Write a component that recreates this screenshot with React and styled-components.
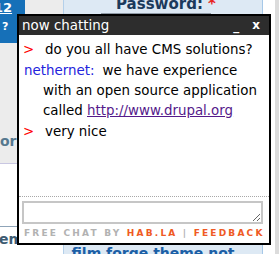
import React from 'react'
import styled, { createGlobalStyle } from 'styled-components'

const GlobalStyle = createGlobalStyle`
  html, body {
    margin: 0;
    padding: 0;
  }
  body {
    width: 279px;
    height: 254px;
    overflow: hidden;
    background: #fff;
    font-family: "DejaVu Sans", Verdana, sans-serif;
  }
`

const messages = [
  { from: 'me', text: 'do you all have CMS solutions?' },
  {
    from: 'nethernet',
    text: 'we have experience with an open source application called ',
    link: 'http://www.drupal.org',
  },
  { from: 'me', text: 'very nice' },
]

const App = () => {
  return (
    <>
      <GlobalStyle />
      <Page>
        <Side>
          <SideTop>
            <BlueTab>
              <TabNumber>12</TabNumber>
              <TabHelp>?</TabHelp>
            </BlueTab>
            <SideLabel>or</SideLabel>
          </SideTop>
          <SideMiddle />
          <SideLabel $bottom>eme</SideLabel>
        </Side>

        <Main>
          <LoginPanel>
            <PanelLabel>
              Password: <Required>*</Required>
            </PanelLabel>
            <PanelInput />
          </LoginPanel>
          <ThemePanel>film forge theme not</ThemePanel>
        </Main>

        <Gutter>
          <Scroll />
        </Gutter>

        <ChatWindow>
          <ChatHeader>
            <ChatTitle>now chatting</ChatTitle>
            <HeaderControls>
              <Minimize>_</Minimize>
              <Close>x</Close>
            </HeaderControls>
          </ChatHeader>

          <MessageList>
            {messages.map((m, i) => (
              <Message key={i}>
                {m.from === 'me' ? (
                  <Arrow>&gt;</Arrow>
                ) : (
                  <Sender>{m.from}:</Sender>
                )}
                {m.text}
                {m.link && <ChatLink href={m.link}>{m.link}</ChatLink>}
              </Message>
            ))}
          </MessageList>

          <InputArea>
            <ChatInput />
          </InputArea>

          <Footer>
            FREE CHAT BY <Brand>HAB.LA</Brand> | <Brand>FEEDBACK</Brand>
          </Footer>
        </ChatWindow>
      </Page>
    </>
  )
}

export default App

const Page = styled.div`
  position: relative;
  width: 279px;
  height: 254px;
  display: flex;
  overflow: hidden;
`

const Side = styled.div`
  width: 63px;
  display: flex;
  flex-direction: column;
`

const SideTop = styled.div`
  height: 163px;
  background: #ececec;
  border-bottom: 1px solid #c9c7e2;
  display: flex;
  flex-direction: column;
`

const BlueTab = styled.div`
  width: 25px;
  height: 43px;
  background: #1670b8;
  color: #fff;
  font-family: Verdana, "DejaVu Sans", sans-serif;
  font-weight: bold;
  overflow: hidden;
`

const TabNumber = styled.div`
  font-size: 13px;
  line-height: 15px;
  margin: 0 0 0 -6px;
  text-decoration: underline;
`

const TabHelp = styled.div`
  font-size: 11px;
  line-height: 12px;
  margin: 6px 0 0 2px;
`

const SideLabel = styled.div`
  margin-top: ${p => (p.$bottom ? '4px' : 'auto')};
  margin-bottom: ${p => (p.$bottom ? '0' : '14px')};
  margin-left: ${p => (p.$bottom ? '-1px' : '0')};
  font-size: 14px;
  line-height: 16px;
  font-weight: bold;
  color: ${p => (p.$bottom ? '#3d5b72' : '#56788f')};
  white-space: nowrap;
`

const SideMiddle = styled.div`
  height: 62px;
  border-bottom: 1px solid #8fa4b8;
`

const Main = styled.div`
  width: 200px;
  display: flex;
  flex-direction: column;
`

const LoginPanel = styled.div`
  flex: 1;
  background: #dde9f4;
  border-left: 1px solid #b4d0ea;
  border-right: 1px solid #a6c8e8;
  display: flex;
  flex-direction: column;
  align-items: center;
`

const PanelLabel = styled.div`
  margin-top: -5px;
  margin-left: 6px;
  font-size: 15px;
  line-height: 18px;
  font-weight: bold;
  color: #1b3a5c;
`

const Required = styled.span`
  color: #e8231e;
`

const PanelInput = styled.div`
  width: 110px;
  height: 30px;
  margin-left: -14px;
  border-top: 1px solid #8f9aa6;
  background: #eef3f8;
`

const ThemePanel = styled.div`
  height: 9px;
  border-top: 1px solid #b4d0ea;
  border-left: 1px solid #b4d0ea;
  border-right: 1px solid #a6c8e8;
  background: #dde9f4;
  font-size: 14px;
  line-height: 17px;
  font-weight: bold;
  color: #1b5fa6;
  text-align: center;
  overflow: hidden;
  text-indent: -20px;
`

const Gutter = styled.div`
  flex: 1;
  display: flex;
  justify-content: flex-end;
`

const Scroll = styled.div`
  width: 4px;
  background: #dcdcdc;
`

const ChatWindow = styled.div`
  position: absolute;
  left: 17px;
  top: 14px;
  width: 254px;
  height: 231px;
  box-sizing: border-box;
  border: 2px solid #000;
  background: #fff;
  display: flex;
  flex-direction: column;
  font-family: "DejaVu Sans", Verdana, sans-serif;
`

const ChatHeader = styled.div`
  height: 19px;
  background: #2d2d2d;
  color: #fff;
  display: flex;
  align-items: center;
  justify-content: space-between;
  padding: 0 9px 0 3px;
`

const ChatTitle = styled.div`
  font-size: 13.4px;
  line-height: 19px;
`

const HeaderControls = styled.div`
  display: flex;
  align-items: center;
  gap: 13px;
`

const Minimize = styled.span`
  font-size: 12px;
  line-height: 19px;
  font-weight: bold;
  position: relative;
  top: 1px;
`

const Close = styled.span`
  font-size: 12px;
  line-height: 19px;
  font-weight: bold;
`

const MessageList = styled.div`
  flex: 1;
  padding: 5px 4px 0 4px;
`

const Message = styled.div`
  font-size: 13.4px;
  line-height: 20px;
  color: #000;
  padding-left: 20px;
  margin-bottom: 1px;
`

const Arrow = styled.span`
  display: inline-block;
  width: 22px;
  margin-left: -20px;
  color: #f00;
`

const Sender = styled.span`
  margin-left: -19px;
  margin-right: 8px;
  color: #2424dc;
`

const ChatLink = styled.a`
  color: #551a8b;
  text-decoration: underline;
`

const InputArea = styled.div`
  border-top: 1px dotted #a8a8a8;
  padding: 4px 0 0 3px;
`

const ChatInput = styled.textarea`
  display: block;
  width: 241px;
  height: 23px;
  box-sizing: border-box;
  border: 2px solid #c6c6c6;
  margin: 0;
  padding: 2px;
  resize: both;
  outline: none;
`

const Footer = styled.div`
  height: 19px;
  padding-left: 5px;
  font-size: 9px;
  line-height: 19px;
  font-weight: bold;
  letter-spacing: 2.2px;
  color: #b2b2b2;
  white-space: nowrap;
`

const Brand = styled.span`
  color: #ef5a24;
`
